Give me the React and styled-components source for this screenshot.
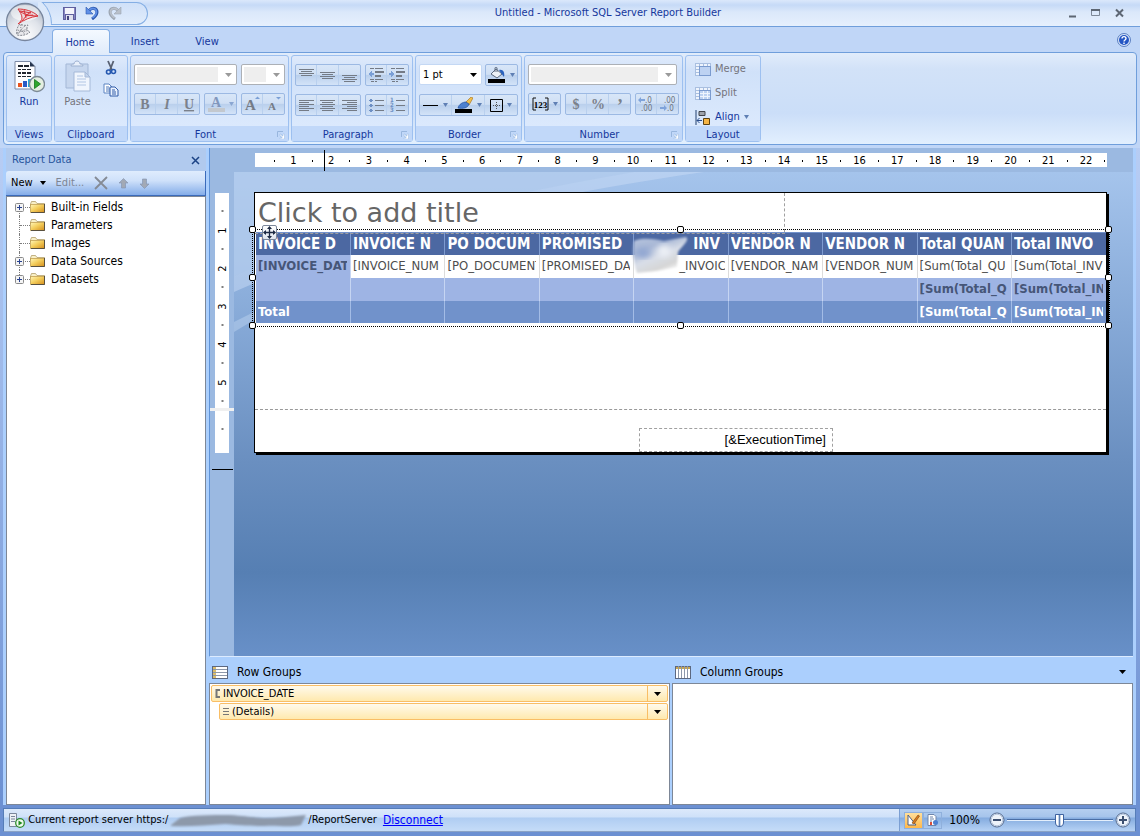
import styled, { createGlobalStyle, css } from 'styled-components';

const ui = '"DejaVu Sans Condensed", "Noto Sans", sans-serif';

const GlobalStyle = createGlobalStyle`
    * { box-sizing: border-box; }
    body {
        margin: 0;
        font-family: ${ui};
        font-size: 11px;
        line-height: 14px;
        color: #000;
        background: #6c90d2;
    }
    button, select, input { font: inherit; color: inherit; margin: 0; }
    svg { display: block; flex: none; }
`;

const Window = styled.div`
    min-height: 100vh;
    display: flex;
    flex-direction: column;
    position: relative;
    padding-bottom: 4px;
    background: linear-gradient(#bfd5f6 0, #b5cbf3 180px, #6c90d2 800px);
`;

/* title bar */

const TitleBar = styled.header`
    height: 27px;
    display: flex;
    align-items: center;
    position: relative;
    border-bottom: 1px solid #6f9edb;
    background: linear-gradient(#dbe8fb 0, #c6daf7 5px, #cfe0f8 8px, #dbe8fa 12px, #e6f0fd 100%);
`;

const Orb = styled.button`
    position: absolute;
    z-index: 2;
    left: 5px;
    top: 2px;
    width: 40px;
    height: 40px;
    padding: 0;
    border: 0;
    background: none;
`;

const QuickAccess = styled.div`
    position: relative;
    overflow: hidden;
    display: flex;
    align-items: center;
    gap: 9px;
    width: 110px;
    height: 23px;
    margin-left: 38px;
    padding-left: 25px;
    border-radius: 0 12px 12px 0;
    background: linear-gradient(#cfe0f8, #e2edfc);
    box-shadow: inset 0 0 0 1px #84aee4;

    &::before {
        content: "";
        position: absolute;
        left: -45px;
        top: -8px;
        width: 57px;
        height: 57px;
        border: 1px solid #84aee4;
        border-radius: 50%;
        background: #dbe8fa;
    }
`;

const IconButton = styled.button`
    display: inline-flex;
    align-items: center;
    justify-content: center;
    padding: 0;
    border: 0;
    background: none;
`;

const Title = styled.h1`
    flex: 1;
    margin: 0;
    padding-left: 4px;
    text-align: center;
    font-size: 11px;
    font-weight: 400;
    color: #15379c;
`;

const WindowButtons = styled.div`
    display: flex;
    gap: 8px;
    padding-right: 12px;
`;

/* ribbon */

const Tabs = styled.nav`
    display: flex;
    align-items: flex-end;
    height: 25px;
    padding: 0 9px 0 52px;
    background: #c0d6f7;
`;

const Tab = styled.button`
    height: ${p => (p.$active ? '24px' : '22px')};
    min-width: ${p => (p.$active ? '58px' : '62px')};
    padding: 2px 0 0 8px;
    border: 1px solid transparent;
    color: #15379c;
    background: none;

    ${p => p.$active && css`
        position: relative;
        z-index: 1;
        margin-bottom: -1px;
        padding: 2px 8px 0 6px;
        border-color: #84aee4;
        border-bottom: 0;
        border-radius: 4px 4px 0 0;
        background: linear-gradient(#f4f9ff, #e1ecfb);
    `}
`;

const HelpButton = styled(IconButton)`
    align-self: center;
    margin-left: auto;
`;

const RibbonWrap = styled.div`
    padding: 0 3px 3px;
    background: #c0d6f7;
`;

const Ribbon = styled.div`
    display: flex;
    gap: 2px;
    height: 93px;
    padding: 2px;
    border: 1px solid #6f9edb;
    border-radius: 4px;
    background: linear-gradient(#e1ecfb 0, #d2e2f8 16px, #cbdef8 60px, #e2effe 100%);
`;

const GroupBox = styled.section`
    display: flex;
    flex-direction: column;
    border: 1px solid #9dc0f0;
    border-radius: 3px;
    background: linear-gradient(#dfeafb 0, #d0e1f9 16px, #dbe9fd 70px);
`;

const GroupBody = styled.div`
    flex: 1;
    display: flex;
    flex-direction: ${p => (p.$row ? 'row' : 'column')};
    gap: ${p => (p.$row ? '4px' : '8px')};
    padding: ${p => (p.$row ? '4px 4px 0' : '8px 3px 0')};
`;

const GroupLabel = styled.h2`
    display: flex;
    align-items: center;
    height: 15px;
    margin: 0;
    padding: 3px 3px 0;
    font-size: 11px;
    font-weight: 400;
    color: #15379c;
    background: #c1d8f9;

    span { flex: 1; text-align: center; }
`;

const BigButton = styled.button`
    display: flex;
    flex-direction: column;
    align-items: center;
    gap: 2px;
    width: ${p => p.$wide};
    padding: 0;
    border: 0;
    background: none;
    color: ${p => (p.disabled ? '#74747c' : '#15379c')};
`;

const SmallStack = styled.div`
    display: flex;
    flex-direction: column;
    align-items: center;
    gap: 7px;
    padding: 0 4px 0 3px;
`;

const Controls = styled.div`
    display: flex;
    gap: ${p => p.$gap || '4px'};
`;

const Segment = styled.div`
    display: flex;
    height: 22px;
    border: 1px solid #9cb9e3;
    border-radius: 2px;
    background: linear-gradient(#d8e6f8 0, #cfdff4 47%, #b9cfec 50%, #d3e3f8 100%);
`;

const SegButton = styled.button`
    display: flex;
    align-items: center;
    justify-content: center;
    gap: ${p => (p.$menu ? '4px' : '0')};
    width: ${p => (p.$menu ? '31px' : '20px')};
    padding: 0;
    border: 0;
    background: none;

    &:not(:first-child) {
        width: ${p => (p.$menu ? '33px' : '22px')};
        border-left: 1px solid #b9d0ee;
    }
`;

const ComboWrap = styled.label`
    position: relative;
    display: block;
    width: ${p => p.$w};
    height: 21px;

    svg {
        position: absolute;
        right: 5px;
        top: 9px;
        pointer-events: none;
    }
`;

const Combo = styled.select`
    appearance: none;
    width: 100%;
    height: 100%;
    padding: 0 0 0 3px;
    border: 1px solid ${p => (p.disabled ? '#acb0b6' : '#c4d8f4')};
    border-radius: 2px;
    opacity: 1;
    background: ${p => (p.disabled
        ? 'linear-gradient(#eee, #eee) 2px 2px / calc(100% - 20px) calc(100% - 4px) no-repeat #fff'
        : '#fff')};
`;

const LayoutButton = styled.button`
    display: flex;
    align-items: center;
    gap: 4px;
    height: 18px;
    padding: 0 3px 0 6px;
    border: 0;
    background: none;
    color: ${p => (p.disabled ? '#74747c' : '#15379c')};
`;

const LayoutBody = styled(GroupBody)`
    gap: 6px;
    padding: 4px 8px 0 3px;
`;

/* workspace */

const Workspace = styled.main`
    flex: 1;
    display: flex;
    gap: 3px;
    margin: 0 4px 3px 3px;
    padding: 0 3px 0 3px;
    background: #abcffd;
`;

const DataPanel = styled.aside`
    width: 200px;
    flex: none;
    display: flex;
    flex-direction: column;
`;

const PanelHeader = styled.div`
    display: flex;
    align-items: center;
    justify-content: space-between;
    height: 23px;
    padding: 1px 6px 0;
    color: #27549c;
    background: #b1caee;

    h2 { margin: 0; font-size: 11px; font-weight: 400; }
`;

const PanelTools = styled.div`
    display: flex;
    align-items: center;
    height: 25px;
    padding-left: 5px;
    border-radius: 3px 0 0 0;
    border-bottom: 1px solid #3b6bbb;
    border-right: 1px solid #3b6bbb;
    background: linear-gradient(#dfecfd 0, #cfe1fa 40%, #84ade9 100%);
`;

const ToolButton = styled.button`
    display: flex;
    align-items: center;
    gap: 7px;
    padding: 0;
    margin-right: 10px;
    border: 0;
    background: none;
    color: ${p => (p.disabled ? '#7d8594' : '#000')};
`;

const Tree = styled.ul`
    flex: 1;
    margin: 0;
    padding: 1px 0 0 8px;
    list-style: none;
    font-size: 12px;
    border: 1px solid #7d8797;
    background: #fff;
`;

const TreeItem = styled.li`
    position: relative;
    display: flex;
    align-items: center;
    height: 18px;
    gap: 6px;

    &::before {
        content: "";
        position: absolute;
        left: 4px;
        top: ${p => (p.$first ? '9px' : '0')};
        height: ${p => (p.$last || p.$first ? '9px' : '18px')};
        border-left: 1px dotted #7c7c7c;
    }

    &::after {
        content: "";
        position: absolute;
        left: 5px;
        top: 9px;
        width: 10px;
        border-top: 1px dotted #7c7c7c;
    }

    svg { position: relative; z-index: 1; }
`;

const Expander = styled.button`
    position: relative;
    z-index: 1;
    width: 9px;
    height: 9px;
    padding: 0;
    border: 0;
    background: none;
    visibility: ${p => (p.$hidden ? 'hidden' : 'visible')};
`;

const Editor = styled.div`
    flex: 1;
    min-width: 0;
    display: flex;
    flex-direction: column;
`;

const Designer = styled.div`
    flex: 1;
    display: grid;
    grid-template-columns: 24px 1fr;
    grid-template-rows: 24px 1fr;
    border-left: 1px solid #5f93d8;
    border-bottom: 1px solid #dcebff;
    background: #9bb9e1;
    position: relative;
`;

const TopRuler = styled.div`
    grid-column: 2;
    display: flex;
    align-items: center;
    width: 852px;
    height: 14px;
    margin: 5px 0 0 21px;
    padding: 1px 0 0 10px;
    overflow: hidden;
    background: #fff;
`;

const TopMark = styled.span`
    flex: none;
    width: calc((100% + 8px) / 45);
    text-align: center;
`;

const LeftRuler = styled.div`
    grid-column: 1;
    width: 14px;
    margin: 21px 0 0 5px;
`;

const LeftBand = styled.div`
    display: flex;
    flex-direction: column;
    align-items: center;
    height: ${p => p.$h};
    padding-top: 9px;
    overflow: hidden;
    background: #fff;
`;

const LeftMark = styled.span`
    flex: none;
    display: flex;
    align-items: center;
    justify-content: center;
    width: 14px;
    height: 19px;
    transform: rotate(-90deg);
`;

const BandSplit = styled.div`
    width: 24px;
    height: 3px;
    margin-left: -5px;
    background: #f0f0f0;
`;

const Dot = styled.i`
    display: inline-block;
    width: 1px;
    height: 2px;
    vertical-align: middle;
    background: #000;
`;

const Cursor = styled.i`
    position: absolute;
    background: #000;
    ${p => (p.$across
        ? css`left: 2px; top: 321px; width: 21px; height: 1px;`
        : css`left: 114px; top: 2px; width: 1px; height: 21px;`)}
`;

const Canvas = styled.div`
    position: relative;
    grid-column: 2;
    overflow: hidden;
    padding: 20px;
    background: linear-gradient(#a5c4ec 0, #86a9d7 150px, #6a8fc0 290px, #567fb3 400px, #6890c8 100%);
`;

const Swoosh = styled.svg`
    position: absolute;
    left: 0;
    top: 0;
`;

const Paper = styled.div`
    position: relative;
    width: 853px;
    border: 1px solid #000;
    background: #fff;
    box-shadow: 2px 2px #000;
`;

const TitleBox = styled.div`
    width: 530px;
    height: 39px;
    padding: 3px 3px;
    font-family: "DejaVu Sans", sans-serif;
    font-size: 27px;
    line-height: 34px;
    color: #666;
    border-right: 1px dashed #a0a0a0;
`;

const Body = styled.div`
    height: 217px;
    border-bottom: 1px dashed #999;
`;

const Footer = styled.div`
    height: 42px;
    padding-top: 18px;
`;

const TimeBox = styled.div`
    width: 194px;
    height: 24px;
    margin-left: 384px;
    padding: 2px 6px;
    border: 1px dashed #a0a0a0;
    font-family: "Liberation Sans", sans-serif;
    font-size: 13px;
    line-height: 17px;
    text-align: right;
`;

const TablixFrame = styled.div`
    position: relative;
    padding-left: 1px;
`;

const Tablix = styled.table`
    width: 100%;
    table-layout: fixed;
    border-collapse: collapse;
    border-top: 1px solid #7392cc;
`;

const rowLook = {
    head: css`height: 22px; color: #fff; background: #4c68a2; font-size: 15px; font-weight: 700; border-color: #7e9bd0;`,
    detail: css`height: 23px; color: #4d4d4d; background: #fff; border-color: #dcdcdc;`,
    sub: css`height: 23px; color: #465678; background: #9eb4e4; font-weight: 700; border-color: #c6d5f2;`,
    total: css`height: 22px; color: #fff; background: #7192cb; font-weight: 700; border-color: #a3bce6;`,
};

const Cell = styled.td`
    padding: 0 3px 0 2px;
    overflow: hidden;
    white-space: nowrap;
    text-align: left;
    font-size: 13px;
    line-height: 18px;
    border-right: 1px solid;
    ${p => rowLook[p.$look]}

    &:last-child { border-right: 0; }
`;

const Clip = styled.div`
    overflow: hidden;
    padding-left: ${p => p.$indent || '0'};
`;

const Selection = styled.div`
    position: absolute;
    left: -3px;
    right: -4px;
    top: -3px;
    bottom: -4px;
    border: 1px dotted #000;
`;

const Handle = styled.i`
    position: absolute;
    width: 7px;
    height: 7px;
    margin: -4px;
    border: 1px solid #000;
    border-radius: 2px;
    background: #fff;
    left: ${p => p.$x};
    top: ${p => p.$y};
`;

const MoveGrip = styled.button`
    position: absolute;
    left: 7px;
    top: -7px;
    width: 15px;
    height: 15px;
    padding: 0;
    border: 1px solid #7b879b;
    border-radius: 2px;
    background: linear-gradient(#fff, #dfe5ee);
`;

const TitleEdge = styled.i`
    position: absolute;
    left: 0;
    top: 1px;
    width: 530px;
    border-top: 1px dashed #a0a0a0;
`;

const Smudge = styled.svg`
    position: absolute;
    left: 376px;
    top: 3px;
`;

/* grouping pane */

const Grouping = styled.div`
    display: flex;
    gap: 2px;
    height: 148px;
`;

const GroupPane = styled.section`
    flex: 1 1 0;
    display: flex;
    flex-direction: column;
`;

const GroupHead = styled.div`
    display: flex;
    align-items: center;
    gap: 9px;
    height: 26px;
    padding: 4px 7px 0 3px;

    h2 { flex: 1; margin: 0; font-size: 12px; font-weight: 400; }
`;

const GroupList = styled.div`
    flex: 1;
    display: flex;
    flex-direction: column;
    gap: 1px;
    padding: 1px;
    border: 1px solid #7d8797;
    background: #fff;
`;

const GroupRow = styled.div`
    display: flex;
    align-items: center;
    gap: 3px;
    height: 17px;
    margin-left: ${p => (p.$nested ? '8px' : '0')};
    padding-left: 3px;
    border: 1px solid #f9be66;
    border-radius: 2px;
    background: linear-gradient(#fffaec, #ffe9ae);

    span { flex: 1; }
`;

const RowMenu = styled(IconButton)`
    align-self: stretch;
    width: 20px;
    border-left: 1px solid #f9be66;
`;

/* status bar */

const StatusBar = styled.footer`
    display: flex;
    height: 24px;
    margin: 0 4px 0 3px;
    border: 1px solid #567db8;
    border-bottom-color: #8ba3c6;
    background: linear-gradient(#dce9fb 0, #cfe1f9 35%, #b0cdf2 42%, #c5dcf8 100%);
`;

const ServerInfo = styled.div`
    flex: 1;
    display: flex;
    align-items: center;
    padding-left: 5px;
    border-right: 1px solid #7b9fd3;

    a { margin-left: 6px; font-size: 12px; color: #00f; }
`;

const ViewTools = styled.div`
    display: flex;
    align-items: center;
    width: 235px;
    padding: 0 4px;
    background: linear-gradient(#b5cff0 0, #a6c4eb 35%, #85acdf 42%, #b6d2f5 100%);
`;

const ViewToggle = styled.button`
    display: flex;
    align-items: center;
    justify-content: center;
    width: 19px;
    height: 17px;
    padding: 0;
    border: 1px solid #8fb0dc;
    background: ${p => (p.$on ? 'linear-gradient(#ffdf9c, #ffb84a)' : 'none')};
`;

const ZoomText = styled.output`
    width: 38px;
    text-align: right;
    font-size: 12px;
    margin-right: 9px;
`;

const Zoom = styled.input`
    appearance: none;
    flex: 1;
    min-width: 0;
    height: 16px;
    margin: 0 2px;
    background: linear-gradient(#4a6ea5, #4a6ea5) 0 7px / 100% 1px no-repeat,
        linear-gradient(#e4effc, #e4effc) 0 8px / 100% 1px no-repeat;

    &::-webkit-slider-thumb {
        appearance: none;
        width: 9px;
        height: 13px;
        border: 1px solid #3f63a0;
        border-radius: 1px 1px 5px 5px;
        background: linear-gradient(90deg, #fff 0 2px, #c2d3ea 2px 3px, #5e7fb3 3px 4px, #c2d3ea 4px 5px, #fff 5px);
    }
`;

const Arrow = ({ color = '#5f7fb4', w = 7 }) => (
    <svg width={w} height="4" viewBox="0 0 8 4" preserveAspectRatio="none" aria-hidden="true"><path d="M0 0h8L4 4z" fill={color} /></svg>
);

const Launcher = () => (
    <svg width="8" height="8" viewBox="0 0 8 8"><path d="M.5 6V.5H6" fill="none" stroke="#98b6de" /><path d="M3 3h1v1h1v1h1V3h1.500v5H3V7h2V6H4V5H3z" fill="#fff" stroke="#9ab8e0" strokeWidth=".5" /></svg>
);

const Lines = ({ rows, bullets, arrow }) => (
    <svg width="17" height="16" viewBox="0 0 17 16" shapeRendering="crispEdges">
        {rows.map(([x, y, w], i) => <rect key={i} x={x} y={y} width={w} height="1" fill="#747b86" />)}
        {bullets === 'dots' && [2, 7, 12].map(y => <path key={y} d={`M2 ${y}h2v1h1v1h-1v1h-2v-1h-1v-1h1z`} fill="#6e90c4" />)}
        {bullets === 'numbers' && ['1', '2', '3'].map((n, i) => (
            <text key={n} x="1" y={5 + i * 5} fontSize="6" fontWeight="700" fill="#6e90c4">{n}</text>
        ))}
        {arrow && <path d={arrow} fill="#7a9fd6" />}
    </svg>
);

const valign = y => [[1, y, 15], [3, y + 2, 11], [1, y + 4, 15], [3, y + 6, 11]];
const halign = (x1, w1) => [0, 1, 2, 3, 4, 5].map(i => (i % 2 ? [x1, 3 + i * 2, w1] : [1, 3 + i * 2, 15]));
const indentRows = [[2, 1, 4], [7, 1, 8], [7, 4, 9], [7, 5, 9], [7, 8, 6], [7, 9, 6], [2, 12, 4], [7, 12, 8], [3, 14, 3], [7, 14, 2]];

const Glyph = ({ children, size = 14, y = 13, italic, underline, color = '#7b818b' }) => (
    <svg width="16" height="16" viewBox="0 0 16 16">
        <text x="8" y={y} textAnchor="middle" fontFamily="Liberation Serif" fontWeight="700" fontSize={size}
            fontStyle={italic ? 'italic' : 'normal'} textDecoration={underline ? 'underline' : 'none'} fill={color}>{children}</text>
    </svg>
);

const OrbIcon = () => (
    <svg width="40" height="40" viewBox="0 0 40 40">
        <defs>
            <radialGradient id="orb" cx=".5" cy=".85" r=".9">
                <stop offset="0" stopColor="#fff" /><stop offset=".5" stopColor="#dfe3ea" /><stop offset="1" stopColor="#a3adbd" />
            </radialGradient>
        </defs>
        <circle cx="20" cy="20" r="18.500" fill="url(#orb)" stroke="#77859d" strokeWidth="1.300" />
        <ellipse cx="20" cy="11" rx="14" ry="8" fill="#fff" opacity=".55" />
        <g fill="none" stroke="#d8353c" strokeWidth="1">
            <path d="M13 7c2 3 4 6 4 9 0 2-2 4-4 6 6-4 12-7 20-8C28 9 20 7 13 7z" fill="#ee8f8f" fillOpacity=".25" />
            <path d="M15 9l11 2M19 8l2 8M26 10l-6 4 8-1M17 19l5-6M14 9c5 3 10 5 19 5" />
        </g>
        <g fill="none" stroke="#83878f" strokeWidth="1">
            <path d="M15 22c-3 3-4 7-3 11 5 1 10 0 13-3-3-1-4-4-2-7-3 1-6 0-8-1z" fill="#e9e9ec" strokeDasharray="2 1" />
            <path d="M13 28c3 2 7 2 10 0M16 23c-1 4 1 7 4 9M20 24c-3 2-5 5-7 8M12 31l10-4" strokeDasharray="1 1" />
        </g>
    </svg>
);

const SaveIcon = () => (
    <svg width="13" height="13" viewBox="0 0 13 13">
        <path d="M0 0h13v13H0z" fill="#5f5f9e" /><path d="M2 1h9v6H2z" fill="#f4f4fb" /><path d="M3 8h7v5H3z" fill="#dfe0ee" /><path d="M4 9h2v4H4z" fill="#44447d" /><path d="M1 1h1v11H1zM11 1h1v11h-1z" fill="#8686c2" />
    </svg>
);

const UndoIcon = ({ color, dark, flip }) => (
    <svg width="14" height="14" viewBox="0 0 14 14">
        <g transform={flip ? 'translate(14 0) scale(-1 1)' : undefined}>
            <path d="M4 4.500C7 1 12 2 12 6c0 3-2 5-5 7" fill="none" stroke={dark} strokeWidth="3" />
            <path d="M4 4.500C7 1 11.500 2 11.500 6c0 2.500-1.500 4-4 6" fill="none" stroke={color} strokeWidth="1.600" />
            <path d="M1 1v7h7z" fill={color} stroke={dark} strokeWidth=".6" />
        </g>
    </svg>
);

const RunIcon = () => (
    <svg width="32" height="33" viewBox="0 0 32 33">
        <path d="M2 1.500h15l5 5V29H2z" fill="#fdfdff" stroke="#7c8aa5" />
        <path d="M17 1.500v5h5z" fill="#27364f" />
        <path d="M5 5h5v2H5zM11 5h5v2h-5zM5 9h3v1H5zM9 9h4v1H9zM14 9h4v1h-4zM5 12h3v2H5zM9 12h4v2H9zM14 12h4v2h-4zM5 16h3v1H5zM9 16h4v1H9zM14 16h4v1h-4z" fill="#20252e" />
        <path d="M5 23h4v4H5z" fill="#e8531e" /><path d="M10 21h4v6h-4z" fill="#2a5bc5" /><path d="M15 19h3v8h-3z" fill="#26a9dc" />
        <circle cx="24" cy="24" r="7.500" fill="#e4eee0" stroke="#7c8994" strokeWidth="1.300" />
        <path d="M21.500 19.500v9l6-4.500z" fill="#2fa62b" stroke="#13761a" strokeWidth=".8" />
    </svg>
);

const PasteIcon = () => (
    <svg width="28" height="33" viewBox="0 0 28 33">
        <path d="M2 4h22v24H2z" fill="#c6d6ee" stroke="#a3b7d6" />
        <path d="M7 6c0-2 2-2 3-2 0-4 6-4 6 0 1 0 3 0 3 2z" fill="#e8effa" stroke="#9db1d1" />
        <path d="M10 12h11l5 5v14H10z" fill="#f0f5fd" stroke="#a5b9d8" /><path d="M21 12v5h5z" fill="#c4d4ec" stroke="#a5b9d8" />
        <path d="M13 16h6M13 19h9M13 22h9M13 25h9" stroke="#b2c6e4" />
    </svg>
);

const CutIcon = () => (
    <svg width="12" height="16" viewBox="0 0 12 16" fill="none">
        <path d="M3 1l4 9M8.500 1L5 10" stroke="#596172" strokeWidth="1.800" />
        <circle cx="3.500" cy="12" r="2" stroke="#2558b0" strokeWidth="1.600" /><circle cx="8.500" cy="11.500" r="2" stroke="#2558b0" strokeWidth="1.600" />
    </svg>
);

const CopyIcon = () => (
    <svg width="16" height="14" viewBox="0 0 16 14">
        <path d="M1 1h5l3 3v6H1z" fill="#fff" stroke="#5d84c2" /><path d="M3 4h3M3 6h4M3 8h4" stroke="#4a76ba" />
        <path d="M7 4h5l3 3v6H7z" fill="#eaf2fe" stroke="#2f5ba8" /><path d="M9 7h3M9 9h4M9 11h4" stroke="#2f5ba8" />
    </svg>
);

const FolderIcon = () => (
    <svg width="15" height="12" viewBox="0 0 15 12">
        <defs><linearGradient id="folder" x2="1" y2="1"><stop stopColor="#fff6b8" /><stop offset=".45" stopColor="#f4cf5e" /><stop offset="1" stopColor="#d48d1b" /></linearGradient></defs>
        <path d="M.5 3L1.500.5h4L7 2.500h7.500V5H.5z" fill="#f8efc6" stroke="#a9935c" strokeWidth=".7" />
        <path d="M.5 3.500h14v8H.5z" fill="url(#folder)" stroke="#b08631" strokeWidth=".6" />
        <path d="M14.500 3v8.500H1" fill="none" stroke="#4b463c" strokeWidth=".9" />
    </svg>
);

const PlusBox = () => (
    <svg width="9" height="9" viewBox="0 0 9 9"><rect x=".5" y=".5" width="8" height="8" rx="1" fill="#f4f4f4" stroke="#8a8a8a" /><path d="M2 4.500h5M4.500 2v5" stroke="#27418f" /></svg>
);

const BlockArrow = ({ down }) => (
    <svg width="11" height="11" viewBox="0 0 11 11"><path d="M5.500 0.500L10 5H7.500v5h-4V5H1z" fill="#a2a9b5" stroke="#7f91af" strokeWidth=".6" transform={down ? 'rotate(180 5.500 5.500)' : undefined} /></svg>
);

const BucketIcon = () => (
    <svg width="18" height="16" viewBox="0 0 18 16">
        <path d="M3 7l5-5 6 5-5 4z" fill="#eef2f7" stroke="#5c6a80" /><path d="M7 5V1c0-1 2-1 2 0v4" fill="none" stroke="#5c6a80" />
        <path d="M11 3c4-1 6 2 5 7l-3-4z" fill="#2a62bd" /><path d="M0 12h17v4H0z" />
    </svg>
);

const BrushIcon = () => (
    <svg width="18" height="16" viewBox="0 0 18 16">
        <path d="M11 5l5-5 2 1-4 7z" fill="#f0c04d" stroke="#a26a13" strokeWidth=".6" /><path d="M3 11c1-4 5-6 8-6l3 2c-1 4-6 5-11 4z" fill="#4c80cf" stroke="#23509d" strokeWidth=".7" />
        <path d="M0 12h17v4H0z" />
    </svg>
);

const BorderIcon = () => (
    <svg width="13" height="13" viewBox="0 0 13 13" fill="none" stroke="#000"><path d="M.5.5h12v12H.5z" /><path d="M6.500 3v8M3 6.500h8" stroke="#555" strokeDasharray="1 1" /></svg>
);

const GridIcon = ({ split }) => (
    <svg width="16" height="13" viewBox="0 0 16 13" fill="none" stroke="#a9bfe0" shapeRendering="crispEdges">
        <path d="M.5.5h15v12H.5z" fill="#eef4fd" /><path d="M4.500 0v13M0 3.500h16M8.500 0v3M12.500 0v3M0 6.500h4M0 9.500h4" />
        <path d="M4.500 3.500h11v9h-11z" fill="#bdd2f2" stroke="#7b9bcf" />{split && <path d="M8.500 4v8M12.500 4v8M5 6.500h10M5 9.500h10" stroke="#eef4fd" />}
    </svg>
);

const AlignIcon = () => (
    <svg width="16" height="15" viewBox="0 0 16 15"><path d="M1 0v15" stroke="#23406f" /><path d="M4 1.500h6v4H4z" fill="#9da3ad" stroke="#40444c" /><path d="M8.500 8.500h6v6h-6z" fill="#f6b545" stroke="#5c4212" /><path d="M2 10.500h5M4.500 8L2 10.500 4.500 13" fill="none" stroke="#2b4e8c" /></svg>
);

const NumberIcon = () => (
    <svg width="17" height="14" viewBox="0 0 17 14"><path d="M4 1H1v12h3M13 1h3v12h-3" fill="none" stroke="#111" /><text x="8.500" y="10.500" textAnchor="middle" fontFamily="Liberation Serif" fontSize="9" fontWeight="700">123</text></svg>
);

const DecimalIcon = ({ top, bottom, right }) => (
    <svg width="18" height="16" viewBox="0 0 18 16" fontSize="8" fill="#6d7480">
        <text x={right ? 5 : 8} y="7">{top}</text><text x={right ? 8 : 4} y="14.500">{bottom}</text>
        <path d={right ? 'M1 11h4v-2l3 3-3 3v-2H1z' : 'M8 5H4v2L1 4l3-3v2h4z'} fill="#7fa3da" />
    </svg>
);

const TableIcon = ({ columns }) => (
    <svg width="16" height="13" viewBox="0 0 16 13" shapeRendering="crispEdges">
        <path d="M.5.5h15v12H.5z" fill="#fff" stroke="#5c6880" />
        {columns
            ? <><path d="M1 1h14v2H1z" fill="#c9a64e" /><path d="M3.500 0v12M6.500 0v12M9.500 0v12M12.500 0v12" stroke="#8d98ab" /></>
            : <><path d="M1 1h3v11H1z" fill="#d9bb6a" /><path d="M1 3.500h14M1 6.500h14M1 9.500h14" stroke="#8d98ab" /></>}
    </svg>
);

const ServerIcon = () => (
    <svg width="16" height="15" viewBox="0 0 16 15"><path d="M.5.5h7v13h-7z" fill="#eef2f7" stroke="#7b879b" /><path d="M2 3.500h4M2 6h4M2 8.500h4" stroke="#7b879b" /><circle cx="11" cy="10" r="4.300" fill="#f1faef" stroke="#2c8b2c" strokeWidth="1.300" /><path d="M9.500 7.500v5l4-2.500z" fill="#1f8b1f" /></svg>
);

const ZoomIcon = ({ plus }) => (
    <svg width="16" height="16" viewBox="0 0 16 16"><circle cx="8" cy="8" r="7" fill="#eef3fa" stroke="#51678c" /><circle cx="8" cy="8" r="5.800" fill="none" stroke="#b5c6de" /><path d={plus ? 'M4 8h8M8 4v8' : 'M4 8h8'} stroke="#3c4f70" strokeWidth="2" /></svg>
);

const tree = [
    { name: 'Built-in Fields', open: true },
    { name: 'Parameters' },
    { name: 'Images' },
    { name: 'Data Sources', open: true },
    { name: 'Datasets', open: true },
];

const columns = [
    { head: 'INVOICE D', detail: '[INVOICE_DAT' },
    { head: 'INVOICE N', detail: '[INVOICE_NUM' },
    { head: 'PO DOCUM', detail: '[PO_DOCUMENT' },
    { head: 'PROMISED', detail: '[PROMISED_DA' },
    { head: 'INV', detail: '_INVOIC', headIndent: '57px', indent: '43px' },
    { head: 'VENDOR N', detail: '[VENDOR_NAM' },
    { head: 'VENDOR N', detail: '[VENDOR_NUM' },
    { head: 'Total QUAN', detail: '[Sum(Total_QU', sum: '[Sum(Total_Q' },
    { head: 'Total INVO', detail: '[Sum(Total_INV', sum: '[Sum(Total_IN' },
];

const handles = [['0%', '0%'], ['50%', '0%'], ['100%', '0%'], ['0%', '50%'], ['100%', '50%'], ['0%', '100%'], ['50%', '100%'], ['100%', '100%']];

const Group = ({ label, launcher, body: BodyPart = GroupBody, row, children }) => (
    <GroupBox>
        <BodyPart $row={row}>{children}</BodyPart>
        <GroupLabel><span>{label}</span>{launcher && <Launcher />}</GroupLabel>
    </GroupBox>
);

const DisabledCombo = ({ w, label }) => (
    <ComboWrap $w={w}>
        <Combo disabled aria-label={label} />
        <Arrow color="#9a9a9a" />
    </ComboWrap>
);

const RibbonGroups = () => (
    <Ribbon>
        <Group label="Views" row>
            <BigButton $wide="36px"><RunIcon />Run</BigButton>
        </Group>
        <Group label="Clipboard" row>
            <BigButton $wide="37px" disabled><PasteIcon />Paste</BigButton>
            <SmallStack>
                <IconButton aria-label="Cut"><CutIcon /></IconButton>
                <IconButton aria-label="Copy"><CopyIcon /></IconButton>
            </SmallStack>
        </Group>
        <Group label="Font" launcher>
            <Controls><DisabledCombo w="103px" label="Font" /><DisabledCombo w="44px" label="Font size" /></Controls>
            <Controls>
                <Segment>
                    <SegButton aria-label="Bold"><Glyph>B</Glyph></SegButton>
                    <SegButton aria-label="Italic"><Glyph italic>I</Glyph></SegButton>
                    <SegButton aria-label="Underline"><Glyph underline>U</Glyph></SegButton>
                </Segment>
                <Segment>
                    <SegButton $menu aria-label="Font color">
                        <svg width="17" height="16" viewBox="0 0 17 16"><text x="8" y="11" textAnchor="middle" fontFamily="Liberation Serif" fontWeight="700" fontSize="14" fill="#8197bd">A</text><path d="M0 12h17v4H0z" fill="#c3c8ce" /></svg>
                        <Arrow w={5} color="#8aa6d2" />
                    </SegButton>
                </Segment>
                <Segment>
                    <SegButton aria-label="Grow font"><svg width="17" height="16" viewBox="0 0 17 16"><text x="1" y="14" fontFamily="Liberation Serif" fontWeight="700" fontSize="15" fill="#747b86">A</text><path d="M11 3h5l-2.500-2.500z" fill="#7a9fd6" /></svg></SegButton>
                    <SegButton aria-label="Shrink font"><svg width="17" height="16" viewBox="0 0 17 16"><text x="3" y="14" fontFamily="Liberation Serif" fontWeight="700" fontSize="11" fill="#747b86">A</text><path d="M11 1h5l-2.500 2.500z" fill="#7a9fd6" /></svg></SegButton>
                </Segment>
            </Controls>
        </Group>
        <Group label="Paragraph" launcher>
            <Controls>
                <Segment>
                    <SegButton aria-label="Top"><Lines rows={valign(2)} /></SegButton>
                    <SegButton aria-label="Middle"><Lines rows={valign(5)} /></SegButton>
                    <SegButton aria-label="Bottom"><Lines rows={valign(8)} /></SegButton>
                </Segment>
                <Segment>
                    <SegButton aria-label="Decrease indent"><Lines rows={indentRows} arrow="M6 6H4V4L0 7l4 3V8h2z" /></SegButton>
                    <SegButton aria-label="Increase indent"><Lines rows={indentRows} arrow="M0 6h2V4l4 3-4 3V8H0z" /></SegButton>
                </Segment>
            </Controls>
            <Controls>
                <Segment>
                    <SegButton aria-label="Align left"><Lines rows={halign(1, 10)} /></SegButton>
                    <SegButton aria-label="Center"><Lines rows={halign(3, 11)} /></SegButton>
                    <SegButton aria-label="Align right"><Lines rows={halign(6, 10)} /></SegButton>
                </Segment>
                <Segment>
                    <SegButton aria-label="Bullets"><Lines bullets="dots" rows={[[7, 3, 9], [7, 8, 9], [7, 13, 9]]} /></SegButton>
                    <SegButton aria-label="Numbering"><Lines bullets="numbers" rows={[[7, 3, 9], [7, 8, 9], [7, 13, 9]]} /></SegButton>
                </Segment>
            </Controls>
        </Group>
        <Group label="Border" launcher>
            <Controls $gap="3px">
                <ComboWrap $w="63px">
                    <Combo aria-label="Border width"><option>1 pt</option></Combo>
                    <Arrow color="#000" />
                </ComboWrap>
                <Segment><SegButton $menu aria-label="Fill"><BucketIcon /><Arrow w={5} /></SegButton></Segment>
            </Controls>
            <Controls>
                <Segment>
                    <SegButton $menu aria-label="Line style"><svg width="16" height="16"><path d="M0 8.500h15" stroke="#000" /></svg><Arrow w={5} /></SegButton>
                    <SegButton $menu aria-label="Line color"><BrushIcon /><Arrow w={5} /></SegButton>
                    <SegButton $menu aria-label="Borders"><BorderIcon /><Arrow w={5} /></SegButton>
                </Segment>
            </Controls>
        </Group>
        <Group label="Number" launcher>
            <DisabledCombo w="149px" label="Number format" />
            <Controls>
                <Segment><SegButton $menu aria-label="Placeholder"><NumberIcon /><Arrow w={5} /></SegButton></Segment>
                <Segment>
                    <SegButton aria-label="Currency"><Glyph>$</Glyph></SegButton>
                    <SegButton aria-label="Percent"><Glyph>%</Glyph></SegButton>
                    <SegButton aria-label="Separator"><Glyph size={18} y={16}>’</Glyph></SegButton>
                </Segment>
                <Segment>
                    <SegButton aria-label="Increase decimals"><DecimalIcon top=".0" bottom=".00" /></SegButton>
                    <SegButton aria-label="Decrease decimals"><DecimalIcon top=".00" bottom=".0" right /></SegButton>
                </Segment>
            </Controls>
        </Group>
        <Group label="Layout" body={LayoutBody}>
            <LayoutButton disabled><GridIcon />Merge</LayoutButton>
            <LayoutButton disabled><GridIcon split />Split</LayoutButton>
            <LayoutButton><AlignIcon />Align <Arrow w={5} /></LayoutButton>
        </Group>
    </Ribbon>
);

const ReportTable = () => (
    <TablixFrame>
        <Tablix>
            <thead>
                <tr>{columns.map((c, i) => <Cell as="th" key={i} $look="head"><Clip $indent={c.headIndent}>{c.head}</Clip></Cell>)}</tr>
            </thead>
            <tbody>
                <tr>{columns.map((c, i) => <Cell key={i} $look={i ? 'detail' : 'sub'}><Clip $indent={c.indent}>{c.detail}</Clip></Cell>)}</tr>
                <tr>{columns.map((c, i) => <Cell key={i} $look="sub"><Clip>{c.sum}</Clip></Cell>)}</tr>
                <tr>{columns.map((c, i) => <Cell key={i} $look="total"><Clip>{i ? c.sum : 'Total'}</Clip></Cell>)}</tr>
            </tbody>
        </Tablix>
        <TitleEdge />
        <Smudge width="62" height="42" viewBox="0 0 62 42">
            <defs>
                <linearGradient id="cloud" x1="0" y1="0" x2=".6" y2="1"><stop stopColor="#b4c2dd" /><stop offset=".35" stopColor="#a9b8d6" /><stop offset=".6" stopColor="#d9dee8" /><stop offset=".85" stopColor="#d6d6d6" /><stop offset="1" stopColor="#f6f6f6" /></linearGradient>
                <filter id="soft"><feGaussianBlur stdDeviation="1" /></filter>
                <filter id="softer"><feGaussianBlur stdDeviation="3" /></filter>
            </defs>
            <path d="M3 6c8-4 22-2 30 0l22-4c4 3-3 8-8 15l-1 15-20 4-20 2C2 28 2 14 3 6z" fill="url(#cloud)" filter="url(#soft)" />
            <g filter="url(#softer)">
                <ellipse cx="12" cy="18" rx="8" ry="5" fill="#8fa5d1" /><ellipse cx="33" cy="16" rx="7" ry="6" fill="#eef1f6" />
            </g>
        </Smudge>
        <Selection>
            {handles.map(([x, y]) => <Handle key={x + y} $x={x} $y={y} />)}
        </Selection>
        <MoveGrip aria-label="Move">
            <svg width="13" height="13" viewBox="0 0 13 13"><path d="M6.500 1v11M1 6.500h11" stroke="#1d2a44" strokeWidth="1.300" /><path d="M6.500 0l2.500 3H4zM6.500 13L4 10h5zM0 6.500L3 4v5zM13 6.500L10 9V4z" fill="#1d2a44" /></svg>
        </MoveGrip>
    </TablixFrame>
);

const App = () => {
    const topMarks = Array.from({ length: 45 }, (_, i) => i + 1);
    const leftMarks = Array.from({ length: 11 }, (_, i) => i + 1);

    return (
        <Window>
            <GlobalStyle />
            <TitleBar>
                <Orb aria-label="Menu"><OrbIcon /></Orb>
                <QuickAccess>
                    <IconButton aria-label="Save"><SaveIcon /></IconButton>
                    <IconButton aria-label="Undo"><UndoIcon color="#5f8fe6" dark="#2b57ae" /></IconButton>
                    <IconButton aria-label="Redo"><UndoIcon color="#b9c0ca" dark="#9ba4b1" flip /></IconButton>
                </QuickAccess>
                <Title>Untitled - Microsoft SQL Server Report Builder</Title>
                <WindowButtons>
                    <IconButton aria-label="Minimize"><svg width="16" height="12"><path d="M5 9.500h7" stroke="#5d6673" strokeWidth="2" /></svg></IconButton>
                    <IconButton aria-label="Maximize"><svg width="16" height="12"><path d="M3.500 2.500h8v6h-8z" fill="none" stroke="#7d8898" /><path d="M3 3h9" stroke="#5d6673" strokeWidth="2" /></svg></IconButton>
                    <IconButton aria-label="Close"><svg width="16" height="12"><path d="M4 2.500l7 7M11 2.500l-7 7" stroke="#5d6673" strokeWidth="2" /></svg></IconButton>
                </WindowButtons>
            </TitleBar>
            <Tabs>
                <Tab $active>Home</Tab>
                <Tab>Insert</Tab>
                <Tab>View</Tab>
                <HelpButton aria-label="Help">
                    <svg width="14" height="14" viewBox="0 0 14 14"><circle cx="7" cy="7" r="6.500" fill="#d8e5f9" stroke="#5b7fc0" /><circle cx="7" cy="7" r="5" fill="#2355c4" /><path d="M5 5.500c0-2.500 4-2.500 4 0 0 1.500-2 1.500-2 3M7 9.500V11" fill="none" stroke="#fff" strokeWidth="1.400" /></svg>
                </HelpButton>
            </Tabs>
            <RibbonWrap><RibbonGroups /></RibbonWrap>
            <Workspace>
                <DataPanel>
                    <PanelHeader>
                        <h2>Report Data</h2>
                        <IconButton aria-label="Close panel"><svg width="9" height="9" viewBox="0 0 9 9"><path d="M1 1l7 7M8 1L1 8" stroke="#1c4385" strokeWidth="1.500" /></svg></IconButton>
                    </PanelHeader>
                    <PanelTools>
                        <ToolButton>New <Arrow w={6} color="#000" /></ToolButton>
                        <ToolButton disabled>Edit...</ToolButton>
                        <ToolButton disabled aria-label="Delete"><svg width="14" height="14" viewBox="0 0 14 14"><path d="M1 1l12 12M13 1L1 13" stroke="#858b95" strokeWidth="1.800" /></svg></ToolButton>
                        <ToolButton disabled aria-label="Move up"><BlockArrow /></ToolButton>
                        <ToolButton disabled aria-label="Move down"><BlockArrow down /></ToolButton>
                    </PanelTools>
                    <Tree>
                        {tree.map((t, i) => (
                            <TreeItem key={t.name} $first={i === 0} $last={i === tree.length - 1}>
                                <Expander $hidden={!t.open} aria-label={'Expand ' + t.name}><PlusBox /></Expander>
                                <FolderIcon />
                                {t.name}
                            </TreeItem>
                        ))}
                    </Tree>
                </DataPanel>
                <Editor>
                    <Designer>
                        <TopRuler>
                            {topMarks.map(n => <TopMark key={n}>{n % 2 ? <Dot /> : n / 2}</TopMark>)}
                        </TopRuler>
                        <LeftRuler>
                            <LeftBand $h="215px">
                                {leftMarks.map(n => <LeftMark key={n}>{n % 2 ? <Dot /> : n / 2}</LeftMark>)}
                            </LeftBand>
                            <BandSplit />
                            <LeftBand $h="42px"><LeftMark><Dot /></LeftMark></LeftBand>
                        </LeftRuler>
                        <Canvas>
                            <Swoosh width="900" height="260" viewBox="0 0 900 260">
                                <path d="M0 0h470C300 24 120 66 0 120z" fill="#c9dcf5" opacity=".5" />
                                <path d="M0 0h400C260 24 100 60 0 104z" fill="#a9c6ea" opacity=".5" />
                                <path d="M0 150l40-20v6L0 160z" fill="#c9dcf5" opacity=".4" />
                            </Swoosh>
                            <Paper>
                                <Body>
                                    <TitleBox>Click to add title</TitleBox>
                                    <ReportTable />
                                </Body>
                                <Footer><TimeBox>[&amp;ExecutionTime]</TimeBox></Footer>
                            </Paper>
                        </Canvas>
                        <Cursor />
                        <Cursor $across />
                    </Designer>
                    <Grouping>
                        <GroupPane>
                            <GroupHead><TableIcon /><h2>Row Groups</h2></GroupHead>
                            <GroupList>
                                <GroupRow>
                                    <svg width="5" height="9"><path d="M5 1H1.500v7H5" fill="none" stroke="#777" strokeWidth="2" /></svg>
                                    <span>INVOICE_DATE</span>
                                    <RowMenu aria-label="Group menu"><Arrow color="#000" /></RowMenu>
                                </GroupRow>
                                <GroupRow $nested>
                                    <svg width="6" height="7" shapeRendering="crispEdges"><path d="M0 .5h6M0 3.500h6M0 6.500h6" stroke="#777" /></svg>
                                    <span>(Details)</span>
                                    <RowMenu aria-label="Group menu"><Arrow color="#000" /></RowMenu>
                                </GroupRow>
                            </GroupList>
                        </GroupPane>
                        <GroupPane>
                            <GroupHead>
                                <TableIcon columns />
                                <h2>Column Groups</h2>
                                <IconButton aria-label="Grouping options"><Arrow color="#000" /></IconButton>
                            </GroupHead>
                            <GroupList />
                        </GroupPane>
                    </Grouping>
                </Editor>
            </Workspace>
            <StatusBar>
                <ServerInfo>
                    <ServerIcon />
                    <span>&nbsp;Current report server https:/</span>
                    <svg width="140" height="16" viewBox="-6 0 140 16">
                        <defs><filter id="blot" x="-5%" width="110%"><feGaussianBlur stdDeviation="1" /></filter></defs>
                        <g filter="url(#blot)" fill="#8d99aa">
                            <path d="M-3 13L6 6c12-3 30-3 50-3 14 1 20 2 34 3 14 0 28-2 42-3l-5 10c-14 3-22 0-36 1-16 0-26-1-40-2-18 1-36 3-54 2z" />
                        </g>
                    </svg>
                    <span>/ReportServer</span>
                    <a href="#disconnect">Disconnect</a>
                </ServerInfo>
                <ViewTools>
                    <ViewToggle $on aria-label="Design"><svg width="13" height="12" viewBox="0 0 13 12"><path d="M1 1v10h8z" fill="#fff" stroke="#4a5f86" /><path d="M5 9l6-8 1.500 1L7 10z" fill="#e07b1c" stroke="#6d3f10" strokeWidth=".6" /></svg></ViewToggle>
                    <ViewToggle aria-label="Run"><svg width="12" height="12" viewBox="0 0 12 12"><path d="M1 .5h6l2 2v9H1z" fill="#fff" stroke="#6f85aa" /><path d="M3 3h3M3 5h4M3 7h2" stroke="#6f85aa" /><path d="M3 8h2v3H3z" fill="#d94d3a" /><circle cx="8.500" cy="8.500" r="2.500" fill="#4c7fd0" /></svg></ViewToggle>
                    <ZoomText>100%</ZoomText>
                    <IconButton aria-label="Zoom out"><ZoomIcon /></IconButton>
                    <Zoom type="range" min="0" max="100" defaultValue="49" aria-label="Zoom" />
                    <IconButton aria-label="Zoom in"><ZoomIcon plus /></IconButton>
                </ViewTools>
            </StatusBar>
        </Window>
    );
};

export default App;
